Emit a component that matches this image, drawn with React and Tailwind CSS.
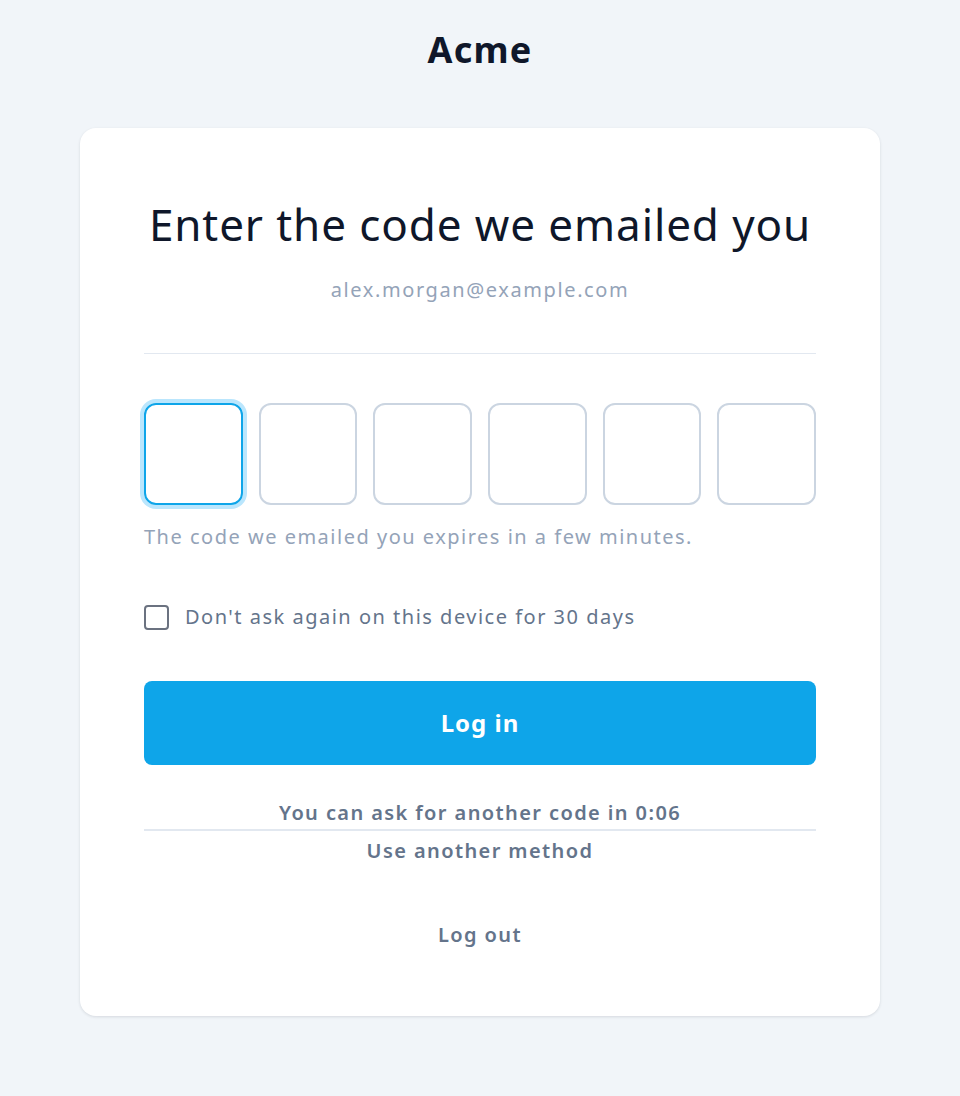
export default function App() {
  const boxes = [0, 1, 2, 3, 4, 5];

  return (
    <div
      className="min-h-[1096px] bg-[#f1f5f9] px-20 pt-[24px] pb-20"
      style={{ fontFamily: '"Noto Sans", "Open Sans", sans-serif' }}
    >
      <div className="text-center text-[36px] font-bold leading-[52px] tracking-[1.2px] text-[#0f172a]">Acme</div>

      <div className="mt-[52px] rounded-2xl bg-white px-16 pt-[64px] pb-[65px] shadow-[0_1px_3px_rgba(15,23,42,0.12)]">
        <h1 className="text-center text-[44px] font-normal leading-[64px] tracking-[0.9px] text-[#0f172a]">
          Enter the code we emailed you
        </h1>
        <p className="mt-[20px] text-center text-[20px] leading-[28px] tracking-[1.6px] text-[#94a3b8]">
          alex.morgan@example.com
        </p>

        <div className="mt-[49px] h-px bg-[#e2e8f0]" />

        <div className="mt-[49px] flex gap-4">
          {boxes.map((i) => (
            <div
              key={i}
              className={
                i === 0
                  ? 'h-[102px] flex-1 rounded-xl border-2 border-[#0ea5e9] ring-4 ring-[#bae6fd]'
                  : 'h-[102px] flex-1 rounded-xl border-2 border-[#cbd5e1]'
              }
            />
          ))}
        </div>

        <p className="mt-[18px] text-[20px] leading-[28px] tracking-[1.5px] text-[#94a3b8]">
          The code we emailed you expires in a few minutes.
        </p>

        <label className="mt-[52px] flex items-center gap-4">
          <span className="h-[25px] w-[25px] rounded-[4px] border-2 border-[#6b7280]" />
          <span className="text-[20px] leading-[28px] tracking-[1.5px] text-[#64748b]">
            Don't ask again on this device for 30 days
          </span>
        </label>

        <button className="mt-[50px] h-[84px] w-full rounded-lg bg-[#0ea5e9] text-[24px] font-bold tracking-[1px] text-white">
          Log in
        </button>

        <div className="mt-[32px] text-center text-[20px] font-semibold leading-[32px] tracking-[1.4px] text-[#64748b]">
          You can ask for another code in 0:06
        </div>
        <div className="h-[2px] bg-[#e2e8f0]" />
        <div className="mt-[4px] text-center text-[20px] font-semibold leading-[32px] tracking-[1.4px] text-[#64748b]">
          Use another method
        </div>

        <div className="mt-[52px] text-center text-[20px] font-semibold leading-[32px] tracking-[1.4px] text-[#64748b]">
          Log out
        </div>
      </div>
    </div>
  );
}
